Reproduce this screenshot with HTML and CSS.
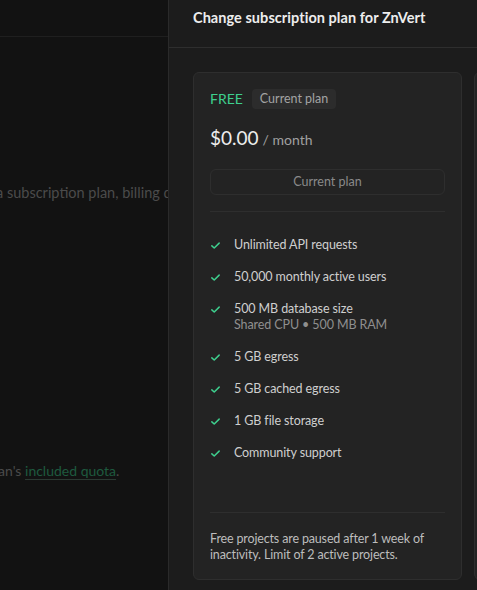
FILE: index.html
```html
<!DOCTYPE html>
<html lang="en">
<head>
<meta charset="utf-8">
<title>Change subscription plan</title>
<link rel="stylesheet" href="styles.css">
</head>
<body>
<div class="app">
  <div class="page">
    <div class="page-top"></div>
    <div class="page-body">
      <p class="page-desc">a subscription plan, billing details</p>
      <p class="page-quota">an's <a class="quota-link" href="#">included quota</a>.</p>
    </div>
  </div>
  <aside class="panel">
    <header class="panel-header">
      <h1 class="panel-title">Change subscription plan for ZnVert</h1>
    </header>
    <div class="plans">
      <section class="card">
        <div class="card-head">
          <span class="plan-name">FREE</span>
          <span class="badge">Current plan</span>
        </div>
        <div class="price"><span class="amount">$0.00</span><span class="period">/ month</span></div>
        <button class="btn" type="button">Current plan</button>
        <div class="divider"></div>
        <ul class="features">
          <li class="feature"><svg class="check" viewBox="0 0 12 12"><path d="M2 6.4l2.6 2.4L10 3.4"/></svg><div><div>Unlimited API requests</div></div></li>
          <li class="feature"><svg class="check" viewBox="0 0 12 12"><path d="M2 6.4l2.6 2.4L10 3.4"/></svg><div><div>50,000 monthly active users</div></div></li>
          <li class="feature"><svg class="check" viewBox="0 0 12 12"><path d="M2 6.4l2.6 2.4L10 3.4"/></svg><div><div>500 MB database size</div><div class="sub">Shared CPU • 500 MB RAM</div></div></li>
          <li class="feature"><svg class="check" viewBox="0 0 12 12"><path d="M2 6.4l2.6 2.4L10 3.4"/></svg><div><div>5 GB egress</div></div></li>
          <li class="feature"><svg class="check" viewBox="0 0 12 12"><path d="M2 6.4l2.6 2.4L10 3.4"/></svg><div><div>5 GB cached egress</div></div></li>
          <li class="feature"><svg class="check" viewBox="0 0 12 12"><path d="M2 6.4l2.6 2.4L10 3.4"/></svg><div><div>1 GB file storage</div></div></li>
          <li class="feature"><svg class="check" viewBox="0 0 12 12"><path d="M2 6.4l2.6 2.4L10 3.4"/></svg><div><div>Community support</div></div></li>
        </ul>
        <div class="divider"></div>
        <p class="note">Free projects are paused after 1 week of inactivity. Limit of 2 active projects.</p>
      </section>
      <section class="card"></section>
    </div>
  </aside>
</div>
</body>
</html>
```
FILE: styles.css
```css
* { box-sizing: border-box; }
html, body { margin: 0; padding: 0; }
body {
  background: #121212;
  font-family: "Lato", "Inter", "Liberation Sans", sans-serif;
  color: #ededed;
  width: 477px;
  height: 590px;
  overflow: hidden;
}
.app {
  display: flex;
  height: 590px;
}
.page {
  width: 168px;
  flex: none;
  background: #121212;
  overflow: hidden;
}
.page-top {
  height: 37px;
  border-bottom: 1px solid #1f1f1f;
}
.page-body {
  white-space: nowrap;
}
.page-desc {
  margin: 146px 0 0 -4px;
  font-size: 14.5px;
  line-height: 20px;
  color: #4b4b4b;
}
.page-quota {
  margin: 258px 0 0 -2px;
  font-size: 14px;
  line-height: 20px;
  color: #4b4b4b;
}
.quota-link {
  color: #1e5a3f;
  text-decoration: underline;
  text-decoration-color: #2c3a33;
  text-underline-offset: 3px;
}
.panel {
  flex: 1;
  min-width: 0;
  background: #1c1c1c;
  border-left: 1px solid #2a2a2a;
  overflow: hidden;
}
.panel-header {
  height: 48px;
  padding: 8px 24px 0;
  border-bottom: 1px solid #2e2e2e;
}
.panel-title {
  margin: 0;
  font-size: 14.5px;
  line-height: 20px;
  font-weight: 700;
  letter-spacing: 0.05px;
  color: #ededed;
  white-space: nowrap;
}
.plans {
  display: flex;
  gap: 12px;
  padding: 24px 0 0 24px;
}
.card {
  flex: none;
  width: 269px;
  height: 508px;
  background: #232323;
  border: 1px solid #2e2e2e;
  border-radius: 6px;
  padding: 16px 16px;
  display: flex;
  flex-direction: column;
}
.card-head {
  display: flex;
  align-items: center;
  gap: 9px;
  height: 20px;
}
.plan-name {
  color: #3ecf8e;
  font-size: 14px;
  line-height: 20px;
}
.badge {
  background: #2c2c2c;
  color: #a3a3a3;
  font-size: 12.5px;
  line-height: 20px;
  padding: 0 8px;
  border-radius: 4px;
}
.price {
  margin-top: 15px;
  display: flex;
  align-items: baseline;
  gap: 4px;
  height: 28px;
}
.amount {
  font-size: 19px;
  line-height: 28px;
  color: #ededed;
}
.period {
  font-size: 14px;
  color: #a0a0a0;
}
.btn {
  margin-top: 17px;
  height: 26px;
  width: 100%;
  background: transparent;
  border: 1px solid #2e2e2e;
  border-radius: 6px;
  color: #8a8a8a;
  font-family: inherit;
  font-size: 12.5px;
  line-height: 20px;
  padding: 0;
}
.divider {
  height: 1px;
  background: #2e2e2e;
  margin-top: 16px;
  flex: none;
}
.features {
  list-style: none;
  margin: 0;
  padding: 25px 0 0;
  display: flex;
  flex-direction: column;
  gap: 16px;
  flex: 1;
}
.feature {
  display: flex;
  align-items: flex-start;
  gap: 13px;
  font-size: 12.5px;
  letter-spacing: -0.1px;
  line-height: 16px;
  color: #cfcfcf;
}
.check {
  width: 11px;
  height: 11px;
  margin-top: 3px;
  flex: none;
  fill: none;
  stroke: #3ecf8e;
  stroke-width: 1.6;
  stroke-linecap: round;
  stroke-linejoin: round;
}
.sub {
  color: #8f8f8f;
}
.note {
  margin: 18px 0 0;
  font-size: 12.5px;
  letter-spacing: -0.15px;
  line-height: 16px;
  color: #bdbdbd;
}
```
